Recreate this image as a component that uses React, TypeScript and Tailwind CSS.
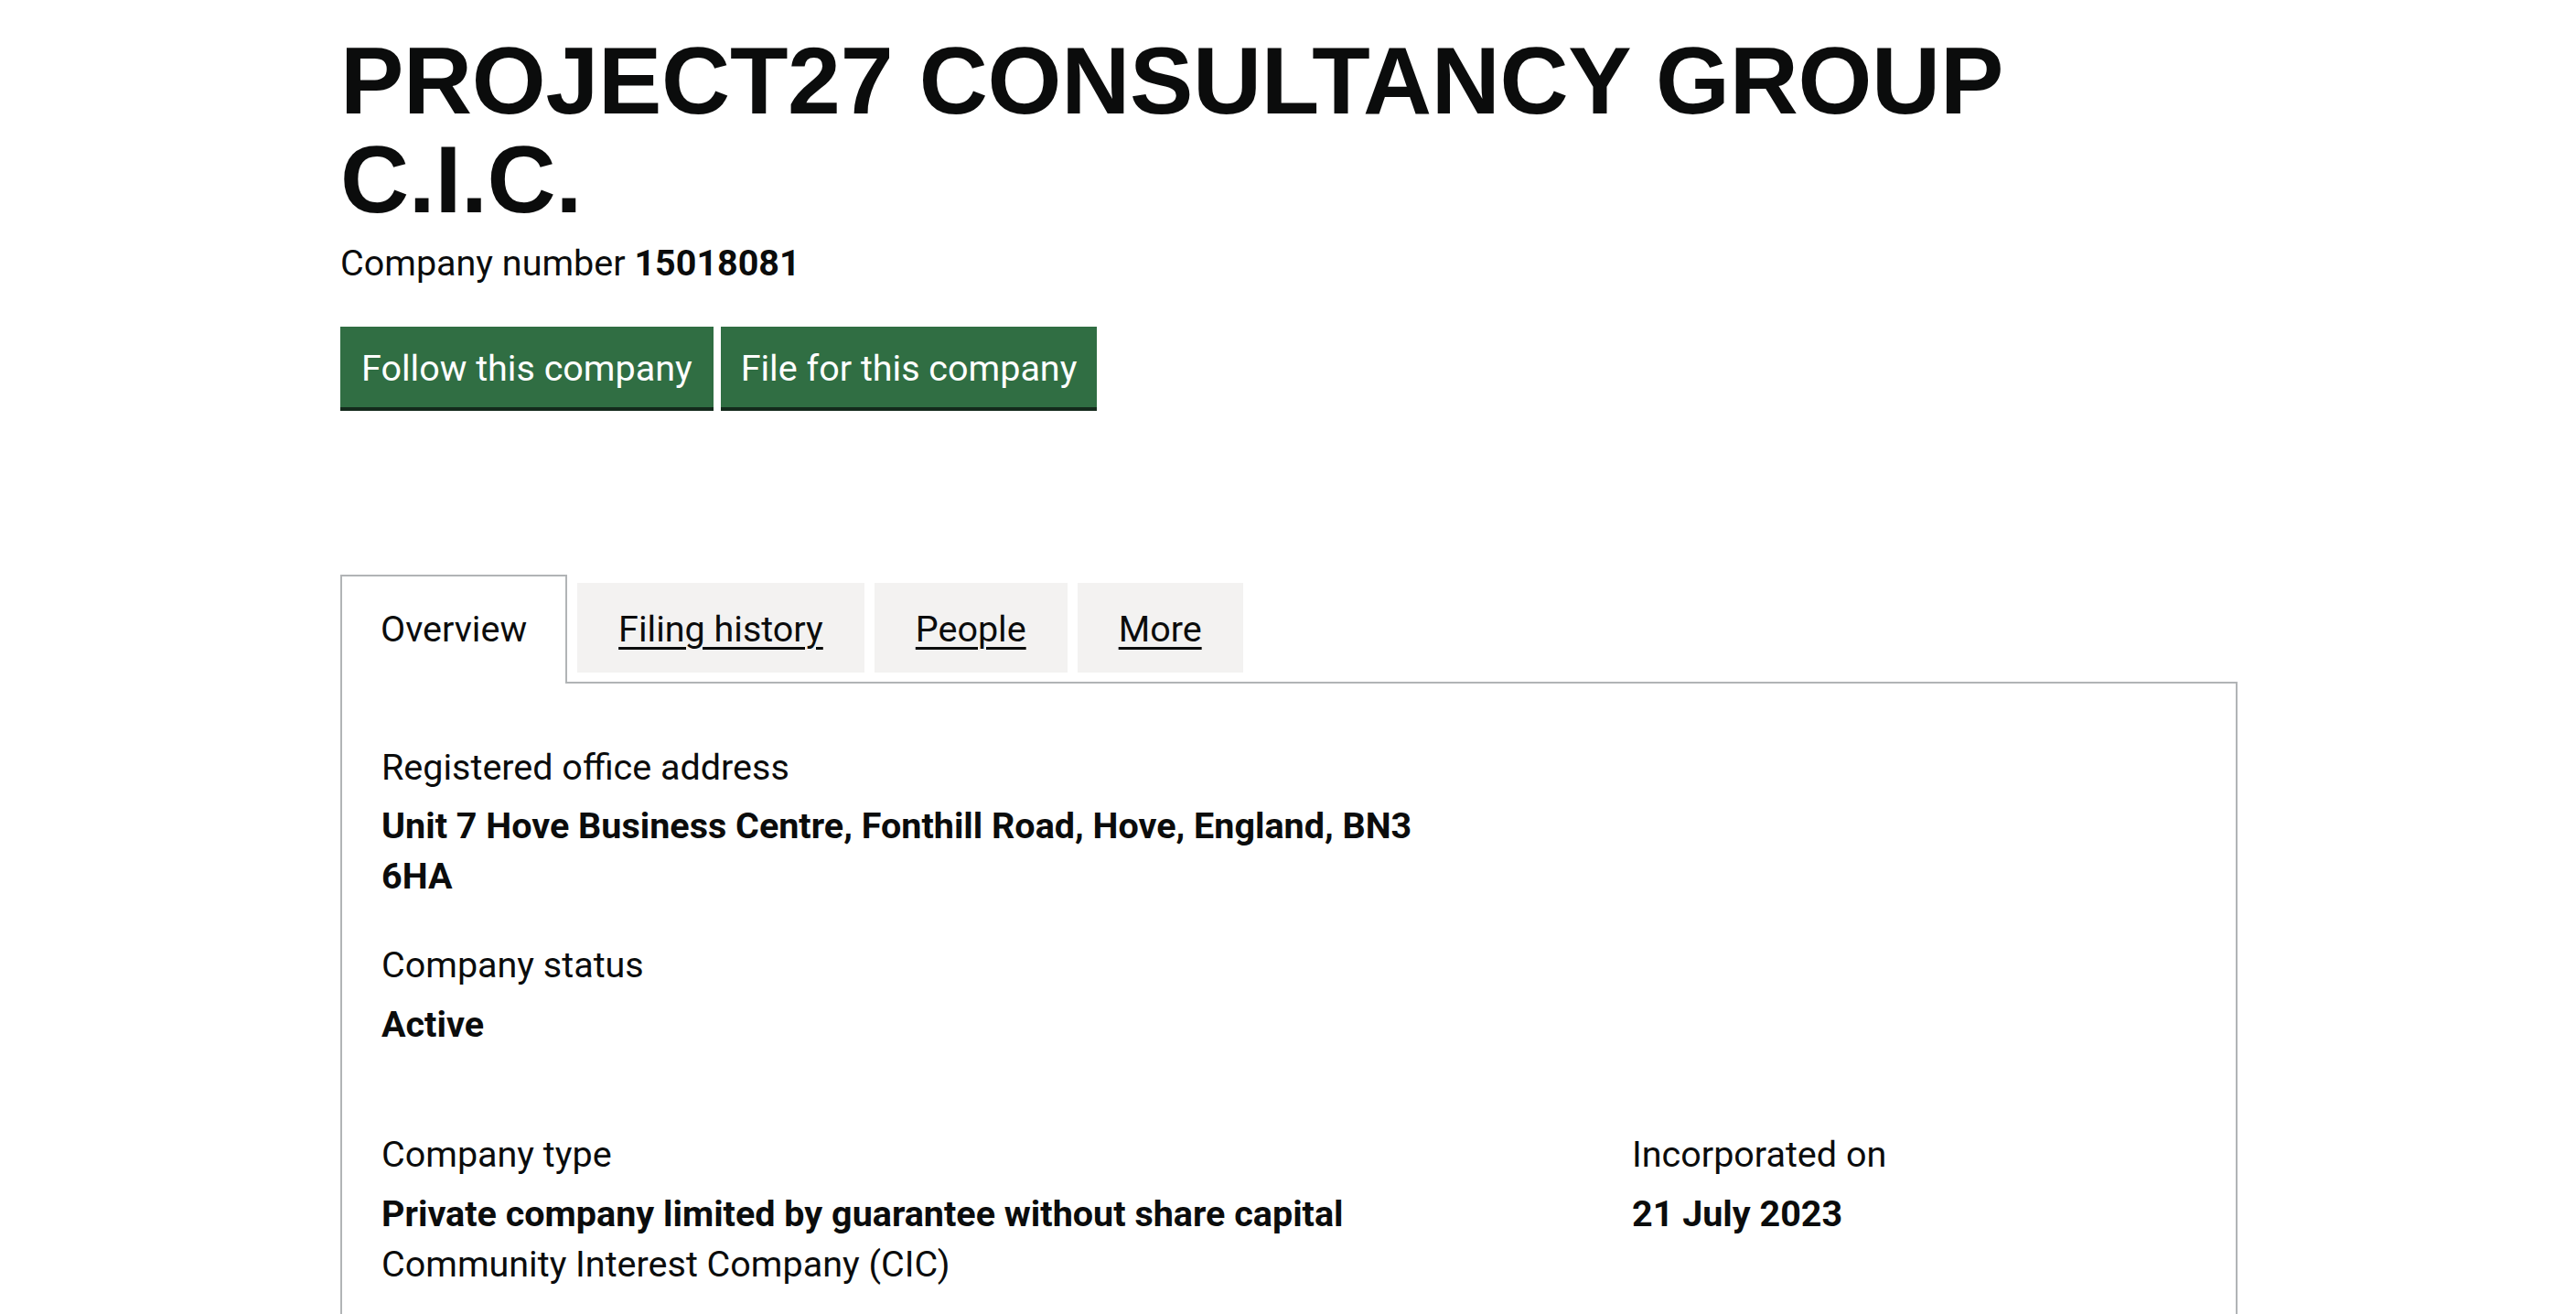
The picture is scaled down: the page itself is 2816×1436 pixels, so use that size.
export default function App() {
  const tabs = ["Filing history", "People", "More"];

  return (
    <div className="min-h-screen bg-white text-[#0b0c0c] font-['Roboto','Liberation_Sans',Arial,sans-serif]">
      <main className="ml-[372px] w-[2074px] pt-[34px]">
        <h1 className="max-w-[1950px] font-['Liberation_Sans',Arial,sans-serif] text-[104px] font-bold leading-[108px] tracking-[-0.3px]">
          PROJECT27 CONSULTANCY GROUP C.I.C.
        </h1>
        <p className="mt-[10px] text-[39.5px] leading-[55px]">
          Company number <strong className="font-bold">15018081</strong>
        </p>

        <div className="mt-[42px] flex gap-[8px]">
          <button className="bg-[#306e43] px-[23px] pt-[18px] pb-[15px] text-[39.5px] leading-[55px] text-white shadow-[0_4px_0_#142a1c]">
            Follow this company
          </button>
          <button className="bg-[#306e43] px-[22px] pt-[18px] pb-[15px] text-[39.5px] leading-[55px] text-white shadow-[0_4px_0_#142a1c]">
            File for this company
          </button>
        </div>

        {/* Tabs */}
        <ul className="mt-[183px] flex items-start">
          <li className="relative z-10 -mb-[2px] border-2 border-b-0 border-[#b1b4b6] bg-white px-[42px] pt-[30px] pb-[32px] text-[39.5px] leading-[55px]">
            Overview
          </li>
          {tabs.map((tab) => (
            <li
              key={tab}
              className="ml-[11px] mt-[9px] bg-[#f3f2f1] px-[45px] pt-[23px] pb-[20px] text-[39.5px] leading-[55px]"
            >
              <a href="#" className="underline decoration-[3px] underline-offset-[6px]">
                {tab}
              </a>
            </li>
          ))}
        </ul>

        <section className="border-2 border-[#b1b4b6] px-[43px] pt-[64px] pb-[64px] text-[39.5px] leading-[55px]">
          <dl>
            <dt>Registered office address</dt>
            <dd className="mt-[9px] max-w-[1180px] font-bold">
              Unit 7 Hove Business Centre, Fonthill Road, Hove, England, BN3 6HA
            </dd>
          </dl>

          <dl className="mt-[42px]">
            <dt>Company status</dt>
            <dd className="mt-[10px] font-bold">Active</dd>
          </dl>

          <div className="mt-[87px] flex">
            <dl className="w-[1367px]">
              <dt>Company type</dt>
              <dd className="mt-[10px] font-bold">Private company limited by guarantee without share capital</dd>
              <dd>Community Interest Company (CIC)</dd>
            </dl>
            <dl>
              <dt>Incorporated on</dt>
              <dd className="mt-[10px] font-bold">21 July 2023</dd>
            </dl>
          </div>
        </section>
      </main>
    </div>
  );
}
